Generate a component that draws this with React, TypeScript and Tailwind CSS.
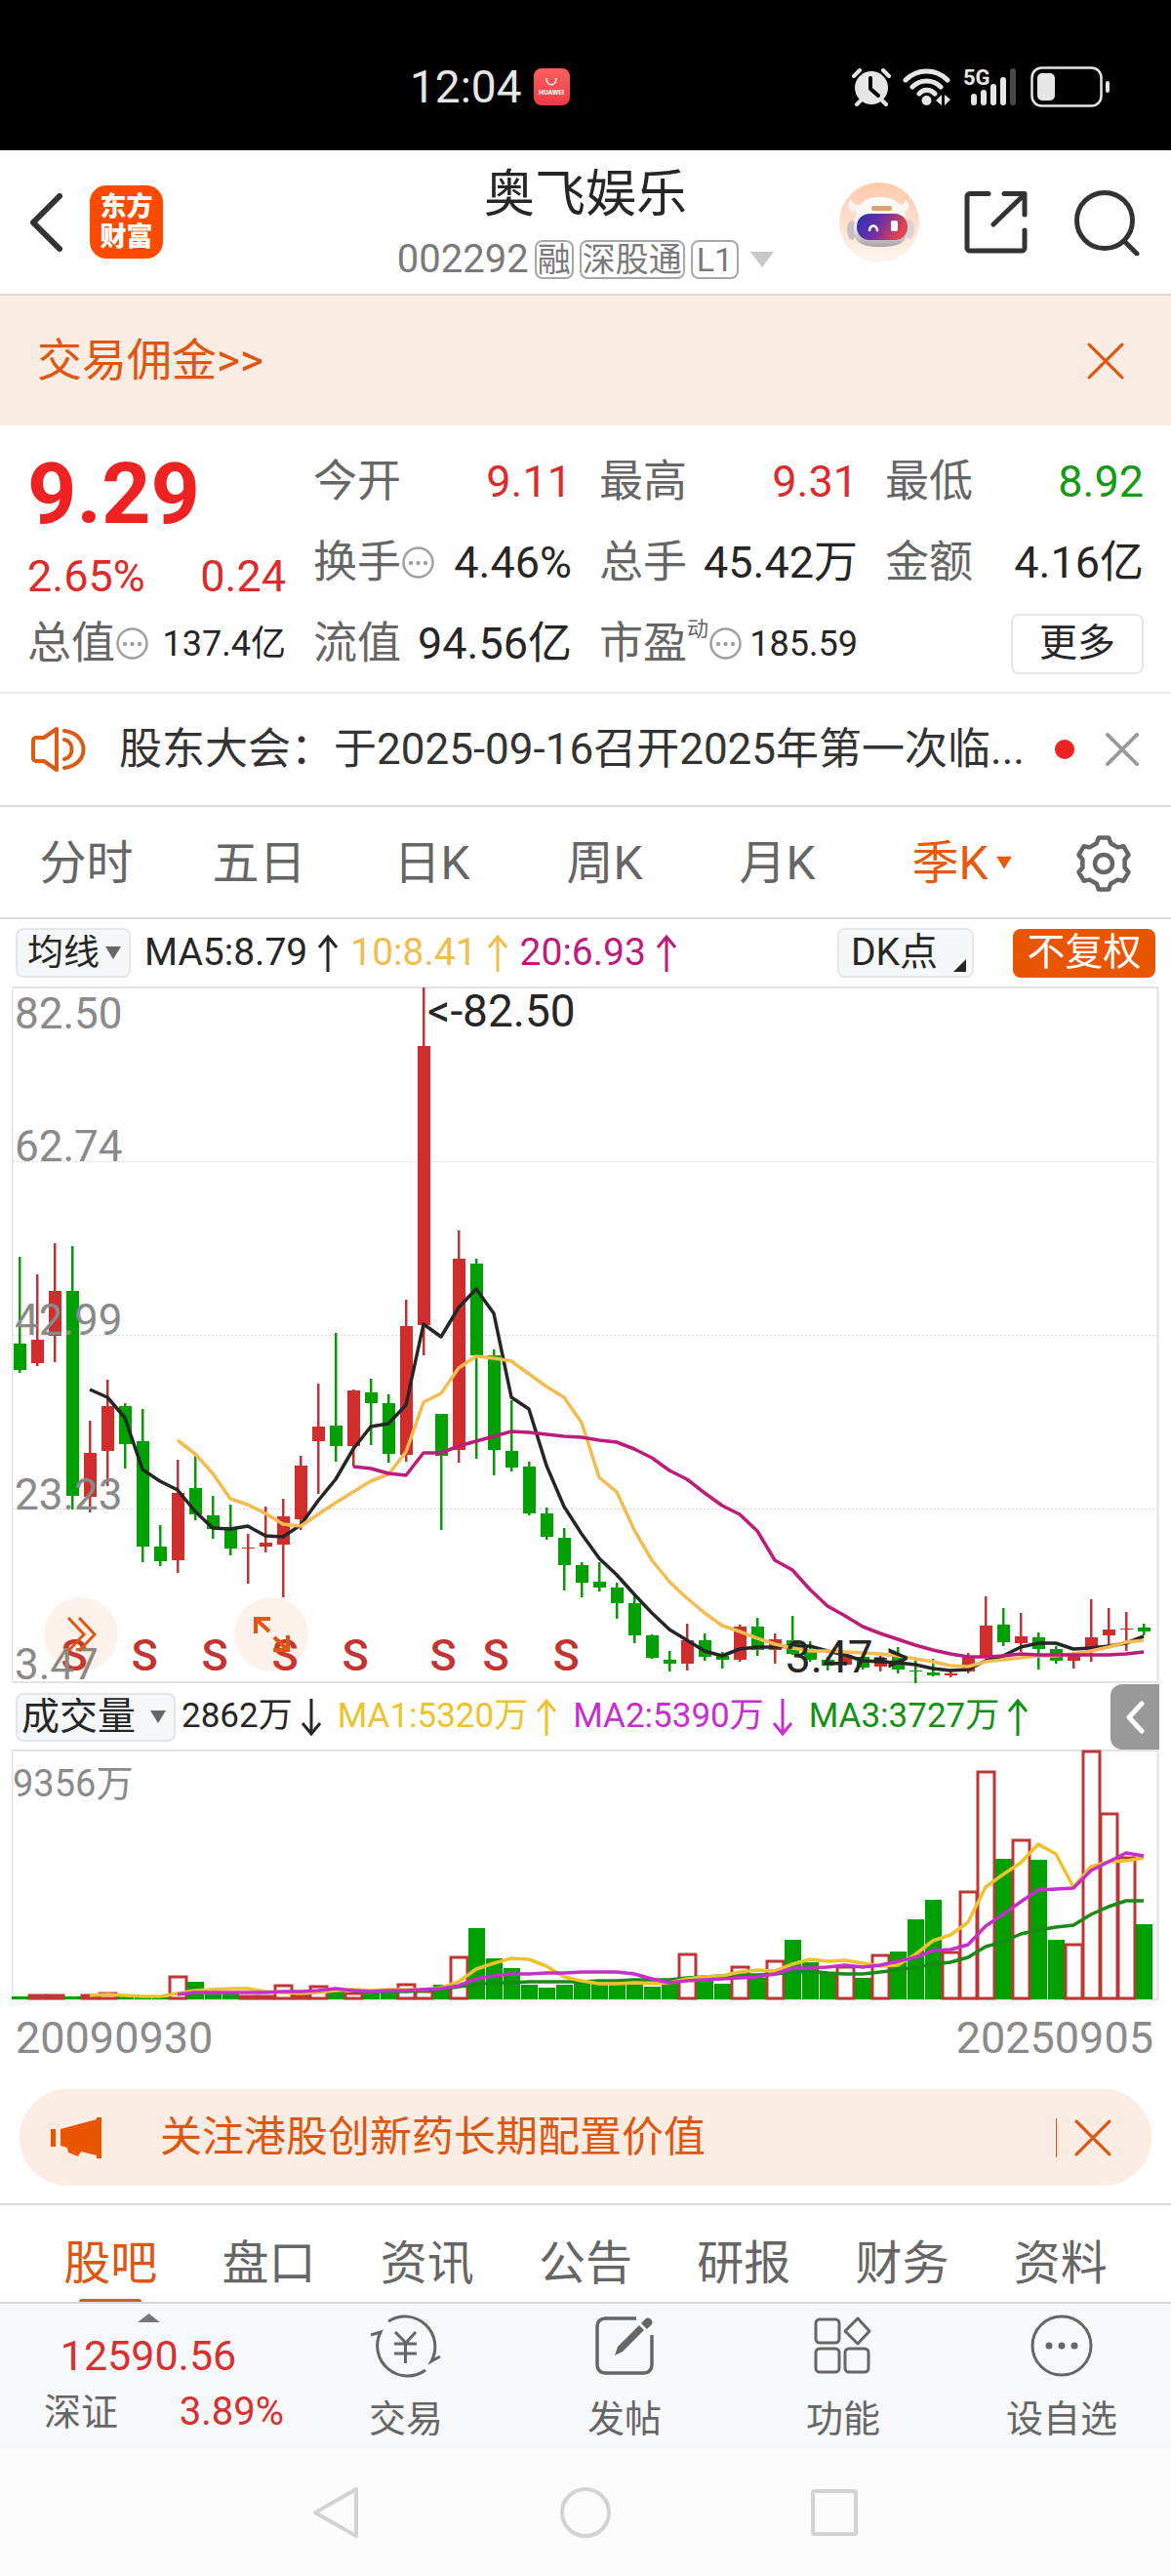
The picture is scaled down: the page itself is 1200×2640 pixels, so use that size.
import React from "react";

type Tone = "up" | "down";
type Candle = [tone: Tone, high: number, top: number, bottom: number, low: number];

const R: Tone = "up";
const G: Tone = "down";

const PITCH = 18;
const FIRST_X = 20;
const xAt = (i: number) => FIRST_X + i * PITCH;

const candles: Candle[] = [
  [G, 1288, 1377, 1404, 1407], [R, 1306, 1373, 1397, 1400], [R, 1274, 1323, 1369, 1396], [G, 1277, 1323, 1533, 1547],
  [R, 1456, 1489, 1534, 1550], [R, 1414, 1441, 1487, 1523], [G, 1438, 1441, 1480, 1505], [G, 1444, 1477, 1585, 1601],
  [G, 1563, 1585, 1600, 1605], [R, 1496, 1530, 1599, 1612], [G, 1490, 1525, 1552, 1558], [G, 1533, 1553, 1567, 1577],
  [G, 1542, 1565, 1587, 1594], [R, 1572, 1586, 1587, 1623], [R, 1544, 1581, 1585, 1591], [R, 1536, 1554, 1583, 1637],
  [R, 1492, 1502, 1557, 1568], [R, 1418, 1462, 1477, 1531], [G, 1366, 1461, 1482, 1498], [R, 1424, 1425, 1482, 1503],
  [G, 1413, 1427, 1438, 1481], [G, 1429, 1438, 1490, 1499], [R, 1332, 1359, 1491, 1498], [R, 1012, 1072, 1358, 1389],
  [G, 1449, 1449, 1492, 1568], [R, 1261, 1290, 1486, 1499], [G, 1290, 1295, 1389, 1495], [G, 1383, 1389, 1486, 1512],
  [G, 1435, 1487, 1504, 1508], [G, 1498, 1503, 1551, 1553], [G, 1545, 1551, 1575, 1578], [G, 1566, 1576, 1604, 1630],
  [G, 1601, 1604, 1622, 1637], [G, 1601, 1621, 1627, 1631], [G, 1622, 1627, 1643, 1659], [G, 1635, 1643, 1676, 1684],
  [G, 1675, 1676, 1699, 1700], [G, 1692, 1701, 1705, 1713], [R, 1664, 1681, 1705, 1712], [G, 1674, 1681, 1698, 1702],
  [G, 1693, 1697, 1701, 1710], [R, 1665, 1667, 1701, 1703], [G, 1658, 1667, 1691, 1697], [R, 1674, 1680, 1691, 1705],
  [G, 1656, 1681, 1695, 1696], [G, 1682, 1692, 1701, 1703], [G, 1698, 1701, 1707, 1712], [R, 1693, 1696, 1706, 1707],
  [G, 1695, 1698, 1709, 1711], [R, 1697, 1699, 1708, 1713], [G, 1688, 1697, 1711, 1715], [G, 1702, 1712, 1713, 1725],
  [G, 1700, 1714, 1717, 1718], [R, 1712, 1715, 1717, 1719], [R, 1694, 1699, 1713, 1715], [R, 1636, 1666, 1697, 1698],
  [G, 1648, 1665, 1683, 1687], [R, 1653, 1677, 1684, 1693], [G, 1673, 1678, 1690, 1711], [G, 1687, 1690, 1702, 1705],
  [R, 1693, 1695, 1702, 1710], [R, 1639, 1678, 1690, 1703], [R, 1648, 1670, 1676, 1687], [R, 1652, 1669, 1670, 1692],
  [G, 1664, 1668, 1672, 1676],
];

const ma5 = [
  1424, 1432, 1453, 1506, 1518, 1527, 1549, 1566, 1567, 1564, 1574, 1575, 1563, 1538, 1516, 1485, 1462, 1459, 1440, 1357,
  1370, 1340, 1321, 1346, 1432, 1444, 1502, 1544, 1572, 1597, 1614, 1634, 1653, 1670, 1681, 1692, 1697, 1690, 1688, 1688,
  1687, 1687, 1692, 1696, 1702, 1703, 1704, 1706, 1710, 1712, 1711, 1702, 1697, 1688, 1684, 1684, 1690, 1689, 1687, 1684,
  1677,
];
const ma10 = [
  1476, 1490, 1510, 1536, 1542, 1551, 1562, 1564, 1552, 1540, 1529, 1518, 1511, 1488, 1437, 1428, 1402, 1390, 1392, 1395,
  1408, 1421, 1432, 1458, 1514, 1529, 1568, 1599, 1621, 1638, 1653, 1666, 1672, 1679, 1685, 1689, 1692, 1692, 1693, 1694,
  1695, 1697, 1700, 1703, 1707, 1708, 1703, 1701, 1699, 1697, 1697, 1695, 1692, 1688, 1683, 1681,
];
const ma20 = [
  1503, 1505, 1510, 1512, 1489, 1489, 1482, 1477, 1472, 1467, 1468, 1470, 1472, 1473, 1476, 1478, 1485, 1494, 1507, 1516,
  1530, 1543, 1552, 1569, 1599, 1609, 1629, 1646, 1656, 1667, 1674, 1680, 1686, 1691, 1695, 1698, 1698, 1697, 1695, 1696,
  1696, 1696, 1696, 1696, 1695, 1693,
];

/* Bar heights of the volume chart, oldest quarter first. */
const volumes = [
  3, 5, 5, 3, 5, 7, 3, 2, 2, 24, 18, 7, 6, 4, 4, 15, 5, 14, 9, 7, 9, 9, 16, 9, 15, 44, 73, 42, 32, 15, 12, 15, 18, 16, 16,
  16, 13, 16, 47, 21, 16, 34, 22, 40, 61, 38, 28, 34, 22, 46, 49, 82, 102, 49, 111, 234, 144, 164, 143, 61, 57, 255, 191,
  146, 77,
];

const volMa1 = [
  4, 5, 4, 3, 3, 6, 9, 10, 11, 11, 8, 7, 6, 7, 9, 10, 9, 10, 10, 10, 12, 18, 31, 37, 42, 41, 34, 23, 19, 16, 16, 17, 16,
  17, 21, 23, 24, 28, 30, 29, 36, 41, 39, 40, 37, 34, 35, 46, 60, 66, 79, 115, 128, 140, 159, 149, 115, 136, 141, 142, 145,
];
const volMa2 = [
  5, 7, 7, 7, 7, 7, 8, 8, 9, 11, 9, 8, 9, 9, 10, 11, 14, 21, 24, 26, 26, 27, 27, 28, 28, 28, 26, 21, 17, 19, 20, 21, 22,
  23, 26, 32, 32, 33, 35, 33, 35, 39, 43, 50, 51, 56, 75, 87, 100, 112, 113, 114, 132, 141, 150, 147,
];
const volMa3 = [
  8, 8, 8, 8, 9, 10, 13, 15, 17, 17, 18, 18, 18, 18, 19, 19, 20, 20, 20, 22, 23, 24, 25, 25, 26, 28, 29, 27, 26, 26, 28,
  30, 33, 36, 38, 43, 54, 59, 67, 71, 74, 76, 87, 95, 101, 101,
];

const signals = [76, 148, 220, 292, 364, 454, 508, 580];

const linePath = (values: number[], start: number, toY: (v: number) => number = (v) => v) =>
  values.map((v, i) => `${i ? "L" : "M"}${xAt(start + i)} ${toY(v)}`).join("");

const fill = (t: Tone) => (t === "up" ? "#cf2e2c" : "#00a000");

function PriceChart() {
  return (
    <svg viewBox="12 1011 1176 715" className="block w-full" role="img" aria-label="季K线图">
      <rect x="12.5" y="1012" width="1174" height="712" fill="none" stroke="#e3e3e3" strokeWidth="2" />
      {[1190, 1368, 1546].map((y) => (
        <path key={y} d={`M13 ${y}.5H1186`} stroke="#d9d9d9" strokeWidth="1" strokeDasharray="2 2" />
      ))}
      {candles.map(([t, high, top, bottom, low], i) => (
        <g key={i} fill={fill(t)}>
          <rect x={xAt(i) - 1} y={high} width="2.500" height={low - high} />
          <rect x={xAt(i) - 6} y={top} width="13" height={Math.max(bottom - top, 1)} />
        </g>
      ))}
      <g fill="none" strokeWidth="3.500" strokeLinejoin="round">
        <path d={linePath(ma5, 4)} stroke="#262626" />
        <path d={linePath(ma10, 9)} stroke="#f2bc4f" />
        <path d={linePath(ma20, 19)} stroke="#bd1c7a" />
      </g>
      <g fill="#8a8a8a" className="text-[44px]">
        <text x="15" y="1054">82.50</text>
        <text x="15" y="1190">62.74</text>
        <text x="15" y="1368">42.99</text>
        <text x="15" y="1547">23.23</text>
      </g>
      <g fill="#c33533" textAnchor="middle" className="text-[45px] font-medium">
        {signals.map((x) => (
          <text key={x} x={x} y="1712">S</text>
        ))}
      </g>
      <text x="15" y="1721" fill="#8a8a8a" className="text-[44px]">3.47</text>
      <g fill="#262626" className="text-[46px]">
        <text x="438" y="1052">&lt;-82.50</text>
        <text x="805" y="1714">3.47-&gt;</text>
      </g>
    </svg>
  );
}

function VolumeChart() {
  const base = 2049;
  const toY = (v: number) => base - v;
  return (
    <svg viewBox="12 1793 1176 258" className="block w-full" role="img" aria-label="成交量图">
      <rect x="12.5" y="1794" width="1174" height="255" fill="none" stroke="#e3e3e3" strokeWidth="2" />
      {volumes.map((v, i) =>
        candles[i][0] === "up" ? (
          <rect key={i} x={xAt(i) - 8} y={base - v + 1} width="17" height={v - 2} fill="#fff" stroke="#bf3634" strokeWidth="3" />
        ) : (
          <rect key={i} x={xAt(i) - 8} y={base - v} width="17" height={v} fill="#00a000" />
        ),
      )}
      <g fill="none" strokeWidth="3.500" strokeLinejoin="round">
        <path d={linePath(volMa3, 19, toY)} stroke="#178a17" />
        <path d={linePath(volMa1, 4, toY)} stroke="#ecc32c" />
        <path d={linePath(volMa2, 9, toY)} stroke="#c62fcb" />
      </g>
      <text x="13" y="1841" fill="#8a8a8a" className="text-[38px]">9356万</text>
    </svg>
  );
}

function Arrow({ down = false }: { down?: boolean }) {
  return (
    <svg width="22" height="38" viewBox="0 0 22 38" fill="none" stroke="currentColor" strokeWidth="3" className="shrink-0" aria-hidden="true">
      {down ? <path d="M11 0V35M2 25L11 36L20 25" /> : <path d="M11 38V3M2 13L11 2L20 13" />}
    </svg>
  );
}

function Cross({ size, width = 4 }: { size: number; width?: number }) {
  return (
    <svg width={size} height={size} viewBox="0 0 36 36" stroke="currentColor" strokeWidth={width} strokeLinecap="round" aria-hidden="true">
      <path d="M2 2L34 34M34 2L2 34" />
    </svg>
  );
}

function Info() {
  return (
    <button aria-label="说明" className="ml-px shrink-0">
      <svg width="33" height="33" viewBox="0 0 33 33" fill="none" stroke="#a0a0a0" strokeWidth="2.5">
        <circle cx="16.5" cy="16.5" r="15" />
        <g fill="#a0a0a0" stroke="none">
          <circle cx="9" cy="17" r="2.2" />
          <circle cx="16.5" cy="17" r="2.2" />
          <circle cx="24" cy="17" r="2.2" />
        </g>
      </svg>
    </button>
  );
}

function Caret({ className = "" }: { className?: string }) {
  return (
    <svg width="16" height="13" viewBox="0 0 16 13" fill="currentColor" className={className} aria-hidden="true">
      <path d="M0 0H16L8 13Z" />
    </svg>
  );
}

function StatusBar() {
  return (
    <div className="flex h-[154px] items-center justify-between bg-black pt-6 pr-[62px] pl-[35%] text-[#e6e6e6]">
      <div className="flex items-center gap-3">
        <span className="text-[46px] leading-none">12:04</span>
        <span className="flex h-[38px] w-[37px] flex-col items-center justify-center rounded-lg bg-linear-to-b from-[#f8605f] to-[#ee3a48] text-white">
          <svg width="12" height="8" viewBox="0 0 12 8" fill="none" stroke="currentColor" strokeWidth="1.5" aria-hidden="true">
            <path d="M1 0C1 9 11 9 11 0" />
          </svg>
          <span className="mt-1 text-[7px] leading-none font-bold">HUAWEI</span>
        </span>
      </div>
      <div className="flex items-center gap-3">
        <svg width="40" height="40" viewBox="0 0 40 40" fill="none" stroke="currentColor" aria-hidden="true">
          <circle cx="20" cy="21" r="17" fill="currentColor" stroke="none" />
          <path d="M2 9L8 3M38 9L32 3M5 38L9 34M35 38L31 34" strokeWidth="4" strokeLinecap="round" />
          <path d="M19 11V22L27 29" stroke="#000" strokeWidth="4" strokeLinecap="round" strokeLinejoin="round" />
        </svg>
        <svg width="50" height="40" viewBox="0 0 50 40" fill="none" stroke="currentColor" strokeWidth="5" strokeLinecap="round" aria-hidden="true">
          <path d="M3 13C15 1 34 1 46 13M10 20C18 12 31 12 39 20M17 27C21 22 28 22 33 27" />
          <circle cx="24.500" cy="34" r="5" fill="currentColor" stroke="none" />
          <path d="M40 28V39L34 34ZM43 39V28L49 33Z" fill="currentColor" stroke="none" />
        </svg>
        <svg width="57" height="40" viewBox="0 0 57 40" fill="currentColor" className="overflow-visible" aria-hidden="true">
          <text x="0" y="18" className="text-[22px] font-bold">5G</text>
          <rect x="8" y="27" width="6" height="12" rx="3" />
          <rect x="18" y="23" width="6" height="16" rx="3" />
          <rect x="28" y="17" width="6" height="22" rx="3" />
          <rect x="38" y="10" width="6" height="29" rx="3" />
          <rect x="48" y="1" width="6" height="38" rx="3" fill="#484848" />
        </svg>
        <svg width="82" height="42" viewBox="0 0 82 42" fill="none" stroke="currentColor" aria-hidden="true">
          <rect x="1.500" y="1.500" width="71" height="39" rx="10" strokeWidth="2.500" />
          <rect x="7" y="7" width="18" height="28" rx="5" fill="currentColor" stroke="none" />
          <rect x="77" y="15" width="4" height="12" rx="2" fill="currentColor" stroke="none" />
        </svg>
      </div>
    </div>
  );
}

function Robot() {
  return (
    <svg width="82" height="82" viewBox="0 0 82 82" aria-hidden="true">
      <defs>
        <linearGradient id="halo" x1="0" y1="0" x2="0" y2="1">
          <stop offset="0" stopColor="#ffc9aa" />
          <stop offset="1" stopColor="#fff6f1" />
        </linearGradient>
        <linearGradient id="visor" x1="0" y1="0" x2="1" y2="0.3">
          <stop offset="0" stopColor="#2335b8" />
          <stop offset="0.500" stopColor="#6f2ea4" />
          <stop offset="1" stopColor="#e0464e" />
        </linearGradient>
        <linearGradient id="shell" x1="0" y1="0" x2="0" y2="1">
          <stop offset="0" stopColor="#ffffff" />
          <stop offset="0.600" stopColor="#f3eeee" />
          <stop offset="1" stopColor="#a9a1a6" />
        </linearGradient>
      </defs>
      <circle cx="41" cy="41" r="41" fill="url(#halo)" />
      <path d="M12 17C7 23 9 31 17 30L24 22C18 24 13 23 12 17ZM68 17C73 23 73 30 65 31L58 22C64 24 68 22 68 17Z" fill="#faf5f3" />
      <ellipse cx="13" cy="49" rx="5" ry="10" fill="#c9c0c3" />
      <ellipse cx="72" cy="48" rx="5" ry="10" fill="#d9d1d2" />
      <path d="M16 40C17 23 26 15 41 15C57 15 67 23 69 40C73 60 65 66 42 66C20 66 12 60 16 40Z" fill="url(#shell)" />
      <rect x="33" y="24" width="21" height="5" rx="2" fill="#dea06c" />
      <rect x="18" y="32" width="52" height="27" rx="13" fill="url(#visor)" />
      <path d="M31 49C32 43 38 43 39 49" fill="none" stroke="#fff" strokeWidth="2.500" strokeLinecap="round" />
      <rect x="53" y="39" width="7" height="11" rx="2" fill="#fff" />
    </svg>
  );
}

function Header() {
  return (
    <header className="grid h-[149px] grid-cols-[1fr_auto_1fr] items-center border-b-2 border-[#d9d9dc] px-7">
      <div className="flex items-center gap-7">
        <button aria-label="返回">
          <svg width="36" height="62" viewBox="0 0 36 62" fill="none" stroke="#333" strokeWidth="6" strokeLinecap="round" strokeLinejoin="round">
            <path d="M33 4L6 31L33 58" />
          </svg>
        </button>
        <a href="#home" className="flex size-[75px] flex-col items-center justify-center rounded-[17px] bg-[#ff4a00] text-[27px] leading-[31px] font-black text-white">
          <span>东方</span>
          <span>财富</span>
        </a>
      </div>
      <div className="flex flex-col items-center gap-4">
        <h1 className="text-[52px] leading-[60px] text-[#262626]">奥飞娱乐</h1>
        <button className="flex items-center gap-1.5 text-[#7a7a7a]">
          <span className="text-[40px] leading-10">002292</span>
          <span className="rounded-lg border-2 border-[#a8a8a8] px-px text-[34px] leading-9">融</span>
          <span className="rounded-lg border-2 border-[#a8a8a8] px-px text-[34px] leading-9">深股通</span>
          <span className="rounded-lg border-2 border-[#a8a8a8] px-1 text-[34px] leading-9">L1</span>
          <svg width="24" height="16" viewBox="0 0 24 16" fill="#c8c8c8" className="ml-1.5" aria-hidden="true">
            <path d="M0 0H24L12 16Z" />
          </svg>
        </button>
      </div>
      <div className="flex items-center justify-end gap-[46px] pr-1">
        <button aria-label="智能助手"><Robot /></button>
        <button aria-label="分享">
          <svg width="66" height="66" viewBox="0 0 66 66" fill="none" stroke="#333" strokeWidth="5" strokeLinecap="round" strokeLinejoin="round">
            <path d="M25 3.500H6a3 3 0 0 0-3 3V59a3 3 0 0 0 3 3H59a3 3 0 0 0 3-3V41M41 3.500H62V25M61 5L30 35" />
          </svg>
        </button>
        <button aria-label="搜索">
          <svg width="68" height="68" viewBox="0 0 68 68" fill="none" stroke="#333" strokeWidth="5" strokeLinecap="round">
            <circle cx="32" cy="32" r="28.500" />
            <path d="M52 53L65 66" />
          </svg>
        </button>
      </div>
    </header>
  );
}

function Quote({ label, value, tone = "text-[#262626]", info = false, small = false, sup }: {
  label: string; value: string; tone?: string; info?: boolean; small?: boolean; sup?: string;
}) {
  return (
    <div className="flex h-[83px] items-center justify-between whitespace-nowrap">
      <span className="flex items-center text-[45px] text-[#666]">
        {label}
        {sup && <span className="mt-2 self-start text-[22px] leading-none">{sup}</span>}
        {info && <Info />}
      </span>
      <span className={`${small ? "text-[36px]" : "text-[45px]"} ${tone}`}>{value}</span>
    </div>
  );
}

function Quotes() {
  return (
    <section className="grid grid-cols-4 gap-x-7 border-b-2 border-[#ececec] px-7 pt-4 pb-2">
      <div className="row-span-2 flex flex-col justify-between pt-2.5 text-[#ee2223]">
        <strong className="text-[88px] leading-[88px] font-bold">9.29</strong>
        <div className="flex justify-between text-[45px] leading-[54px] text-[#dd2b2b]">
          <span>2.65%</span>
          <span>0.24</span>
        </div>
      </div>
      <Quote label="今开" value="9.11" tone="text-[#dd2b2b]" />
      <Quote label="最高" value="9.31" tone="text-[#dd2b2b]" />
      <Quote label="最低" value="8.92" tone="text-[#149a14]" />
      <Quote label="换手" value="4.46%" info />
      <Quote label="总手" value="45.42万" />
      <Quote label="金额" value="4.16亿" />
      <Quote label="总值" value="137.4亿" info small />
      <Quote label="流值" value="94.56亿" />
      <Quote label="市盈" value="185.59" sup="动" info small />
      <div className="flex h-[83px] items-center justify-end">
        <button className="h-[62px] w-[136px] rounded-lg border-2 border-[#e6e6e6] text-[39px] leading-none text-[#262626]">更多</button>
      </div>
    </section>
  );
}

function Notice() {
  return (
    <section className="flex h-[116px] items-center border-b-2 border-[#dcdcde] pr-[33px] pl-8">
      <svg width="58" height="48" viewBox="0 0 58 48" fill="none" stroke="#dd5a12" strokeWidth="4" strokeLinejoin="round" className="shrink-0" aria-hidden="true">
        <path d="M26 3V45L13 36H5a3 3 0 0 1-3-3V15a3 3 0 0 1 3-3H13Z" />
        <path d="M34 14C44 16 44 32 34 34M34 5C60 8 60 40 34 43" strokeLinecap="round" />
      </svg>
      <a href="#notice" className="ml-8 min-w-0 flex-1 overflow-hidden text-[44px] whitespace-nowrap text-[#333]">
        股东大会：于2025-09-16召开2025年第一次临...
      </a>
      <span className="mr-8 size-5 rounded-full bg-[#ee2223]" />
      <button aria-label="关闭公告" className="text-[#999]"><Cross size={34} width={4} /></button>
    </section>
  );
}

function Gear() {
  const pt = (r: number, deg: number) => {
    const a = (deg * Math.PI) / 180;
    return `${(30 + r * Math.cos(a)).toFixed(1)} ${(30 + r * Math.sin(a)).toFixed(1)}`;
  };
  const d = [0, 1, 2, 3, 4, 5]
    .map((k) => -90 + 60 * k)
    .map((a) => `${pt(22, a - 19)}L${pt(27, a - 11)}L${pt(27, a + 11)}L${pt(22, a + 19)}`)
    .join("L");
  return (
    <svg width="60" height="60" viewBox="0 0 60 60" fill="none" stroke="#666" strokeWidth="4.500" strokeLinejoin="round">
      <path d={`M${d}Z`} />
      <circle cx="30" cy="30" r="9" />
    </svg>
  );
}

function PeriodTabs() {
  return (
    <nav className="flex h-[115px] items-center border-b-2 border-[#dcdcde] pt-0.5 text-[48px] text-[#666]">
      {["分时", "五日", "日K", "周K", "月K"].map((t) => (
        <button key={t} className="flex-1">{t}</button>
      ))}
      <button className="flex-1 text-[#e65a0c]" aria-current="true">
        <span className="relative">
          季K
          <Caret className="absolute top-1/2 left-full ml-2 -translate-y-1/2" />
        </span>
      </button>
      <button aria-label="图表设置" className="flex w-[138px] justify-center"><Gear /></button>
    </nav>
  );
}

function MaBar() {
  return (
    <div className="flex h-[69px] items-center px-4 text-[39px] whitespace-nowrap">
      <label className="relative flex items-center text-[#666]">
        <select aria-label="主图指标" className="h-[51px] w-[118px] appearance-none rounded-lg border-2 border-[#e4e6ea] bg-[#f6f7f9] pl-2.5 text-[37px] leading-none text-[#262626]">
          <option>均线</option>
        </select>
        <Caret className="pointer-events-none absolute right-2.5" />
      </label>
      <div className="ml-3.5 flex items-center gap-3">
        <span className="flex items-center gap-2.5 text-[#262626]">MA5:8.79<Arrow /></span>
        <span className="flex items-center gap-2.5 text-[#f2bc4f]">10:8.41<Arrow /></span>
        <span className="flex items-center gap-2.5 text-[#bd1c7a]">20:6.93<Arrow /></span>
      </div>
      <button className="relative ml-auto h-[51px] w-[140px] rounded-lg border-2 border-[#e4e6ea] bg-[#f6f7f9] pl-3 text-left leading-none text-[#262626]">
        DK点
        <svg width="13" height="13" viewBox="0 0 13 13" className="absolute right-1.5 bottom-1" aria-hidden="true">
          <path d="M13 0V13H0Z" fill="#262626" />
        </svg>
      </button>
      <button className="ml-10 h-[50px] w-[146px] rounded-lg bg-[#ea5504] leading-none text-white">不复权</button>
    </div>
  );
}

function VolumeBar() {
  return (
    <div className="flex h-[67px] items-center pr-3 pl-4 text-[35px] whitespace-nowrap">
      <label className="relative flex items-center text-[#666]">
        <select aria-label="副图指标" className="h-[50px] w-[164px] appearance-none rounded-lg border-2 border-[#e4e6ea] bg-[#f6f7f9] pl-1 text-[39px] leading-none text-[#262626]">
          <option>成交量</option>
        </select>
        <Caret className="pointer-events-none absolute right-2.5" />
      </label>
      <div className="ml-1.5 flex items-center gap-4">
        <span className="flex items-center gap-2 text-[#262626]">2862万<Arrow down /></span>
        <span className="flex items-center gap-2 text-[#ecc32c]">MA1:5320万<Arrow /></span>
        <span className="flex items-center gap-2 text-[#c62fcb]">MA2:5390万<Arrow down /></span>
        <span className="flex items-center gap-2 text-[#149114]">MA3:3727万<Arrow /></span>
      </div>
      <button aria-label="展开侧栏" className="ml-auto flex h-[67px] w-[50px] items-center justify-center rounded-l-xl bg-[#999]">
        <svg width="20" height="34" viewBox="0 0 20 34" fill="none" stroke="#fff" strokeWidth="5" strokeLinecap="round" strokeLinejoin="round">
          <path d="M17 3L4 17L17 31" />
        </svg>
      </button>
    </div>
  );
}

function Charts() {
  return (
    <section>
      <MaBar />
      <div className="relative mx-3">
        <PriceChart />
        <button aria-label="快进" className="absolute bottom-[13px] left-[33px] flex size-[76px] items-center justify-center rounded-full bg-[#ea5504]/8">
          <svg width="32" height="36" viewBox="0 0 32 36" fill="none" stroke="#df5610" strokeWidth="3">
            <path d="M3 1L19 18L3 35M14 1L30 18L14 35" />
          </svg>
        </button>
        <button aria-label="全屏" className="absolute bottom-[13px] left-[228px] flex size-[76px] items-center justify-center rounded-full bg-[#ea5504]/8">
          <svg width="38" height="38" viewBox="0 0 38 38" fill="none" stroke="#df5610" strokeWidth="4">
            <path d="M18 3H3V18M3 3L17 16M21 35H36V20M36 35L22 22" />
          </svg>
        </button>
      </div>
      <VolumeBar />
      <div className="mx-3">
        <VolumeChart />
      </div>
      <div className="flex h-[90px] items-center justify-between pr-[18px] pb-4 pl-4 text-[45px] leading-none text-[#8a8a8a]">
        <time>20090930</time>
        <time>20250905</time>
      </div>
    </section>
  );
}

function Promo() {
  return (
    <aside className="mx-5 flex h-[99px] items-center rounded-full bg-[#fcede4] pr-[41px] pl-8 text-[#df5610]">
      <svg width="52" height="44" viewBox="0 0 52 44" fill="#ea5504" className="shrink-0" aria-hidden="true">
        <rect x="0" y="13" width="5" height="18" />
        <path d="M10 13L47 3V1H52V43H47V40L31 36L28 41L18 37L17 32L10 30Z" />
      </svg>
      <a href="#promo" className="ml-[60px] text-[43px]">关注港股创新药长期配置价值</a>
      <span className="ml-auto h-10 w-px bg-[#df5610]" />
      <button aria-label="关闭推广" className="ml-[18px]"><Cross size={38} width={3} /></button>
    </aside>
  );
}

function SectionTabs() {
  return (
    <nav className="mt-[18px] flex h-[103px] border-y-2 border-[#d8d9dc] px-8 text-[48px] text-[#666]">
      {["股吧", "盘口", "资讯", "公告", "研报", "财务", "资料"].map((t, i) =>
        i === 0 ? (
          <button key={t} aria-current="true" className="relative flex-1 pt-5 text-[#df5610]">
            {t}
            <span className="absolute bottom-0 left-1/2 h-[3px] w-16 -translate-x-1/2 rounded-t bg-[#d35f1f]" />
          </button>
        ) : (
          <button key={t} className="flex-1 pt-5">{t}</button>
        ),
      )}
    </nav>
  );
}

const toolIcons: { label: string; icon: React.ReactNode }[] = [
  {
    label: "交易",
    icon: (
      <svg width="76" height="66" viewBox="0 0 76 66" fill="none" stroke="#666" strokeWidth="3">
        <path d="M20 8A31 31 0 0 1 64 49L73 44M58 58A31 31 0 0 1 12 19L2 22" />
        <path d="M27 19L38 30L48 19M26 31H49M26 41H49M37.500 30V51" />
      </svg>
    ),
  },
  {
    label: "发帖",
    icon: (
      <svg width="62" height="62" viewBox="0 0 62 62" fill="none" stroke="#666" strokeWidth="3.500">
        <path d="M43 3H11a8 8 0 0 0-8 8V51a8 8 0 0 0 8 8H51a8 8 0 0 0 8-8V20" />
        <path d="M21 41L24 32L46 10L51 15L29 37ZM48 8L53 3C56 1 61 5 59 9L54 14Z" fill="#666" stroke="none" />
      </svg>
    ),
  },
  {
    label: "功能",
    icon: (
      <svg width="62" height="62" viewBox="0 0 62 62" fill="none" stroke="#666" strokeWidth="3" strokeLinejoin="round">
        <rect x="3" y="4" width="24" height="24" rx="4" />
        <rect x="3" y="34" width="24" height="24" rx="4" />
        <rect x="33" y="34" width="24" height="24" rx="4" />
        <path d="M46 3L58 16L46 29L33 16Z" />
      </svg>
    ),
  },
  {
    label: "设自选",
    icon: (
      <svg width="64" height="64" viewBox="0 0 64 64" fill="none" stroke="#666" strokeWidth="3">
        <circle cx="32" cy="32" r="30" />
        <g fill="#666" stroke="none">
          <circle cx="19" cy="32" r="3.500" />
          <circle cx="32" cy="32" r="3.500" />
          <circle cx="45" cy="32" r="3.500" />
        </g>
      </svg>
    ),
  },
];

function Toolbar() {
  return (
    <footer className="flex h-[149px] bg-[#f7f8fa] text-[38px] text-[#666]">
      <button className="relative flex w-[304px] flex-col items-center pt-7">
        <svg width="23" height="9" viewBox="0 0 23 9" fill="#777" className="absolute top-2.5" aria-hidden="true">
          <path d="M11.500 0L23 9H0Z" />
        </svg>
        <span className="text-[43px] leading-[50px] text-[#d83030]">12590.56</span>
        <span className="mt-2 flex w-full items-center justify-between pr-[13px] pl-[45px] leading-[50px]">
          深证
          <span className="text-[40px] text-[#d83030]">3.89%</span>
        </span>
      </button>
      {toolIcons.map(({ label, icon }) => (
        <button key={label} className="flex flex-1 flex-col items-center pt-2.5">
          <span className="flex h-[66px] items-center">{icon}</span>
          <span className="mt-4 leading-[52px]">{label}</span>
        </button>
      ))}
    </footer>
  );
}

function SystemNav() {
  return (
    <div className="flex h-[130px] items-center justify-center gap-[203px] bg-[#fcfcfc]">
      <button aria-label="系统返回">
        <svg width="52" height="56" viewBox="0 0 52 56" fill="none" stroke="#d3d3d3" strokeWidth="4" strokeLinejoin="round">
          <path d="M46 4V52L4 28Z" />
        </svg>
      </button>
      <button aria-label="主屏幕">
        <svg width="52" height="56" viewBox="0 0 52 56" fill="none" stroke="#d3d3d3" strokeWidth="4">
          <circle cx="26" cy="28" r="24" />
        </svg>
      </button>
      <button aria-label="最近任务">
        <svg width="52" height="56" viewBox="0 0 52 56" fill="none" stroke="#d3d3d3" strokeWidth="4">
          <rect x="4" y="6" width="44" height="44" rx="2" />
        </svg>
      </button>
    </div>
  );
}

export default function App() {
  return (
    <div className="bg-white font-['Roboto','Noto_Sans_CJK_SC',sans-serif]">
      <StatusBar />
      <Header />
      <div className="flex h-[133px] items-center justify-between bg-[#fcede4] pr-12 pl-[38px] text-[#df5610]">
        <a href="#commission" className="text-[46px]">交易佣金&gt;&gt;</a>
        <button aria-label="关闭横幅"><Cross size={38} width={3} /></button>
      </div>
      <Quotes />
      <Notice />
      <PeriodTabs />
      <Charts />
      <Promo />
      <SectionTabs />
      <Toolbar />
      <SystemNav />
    </div>
  );
}
